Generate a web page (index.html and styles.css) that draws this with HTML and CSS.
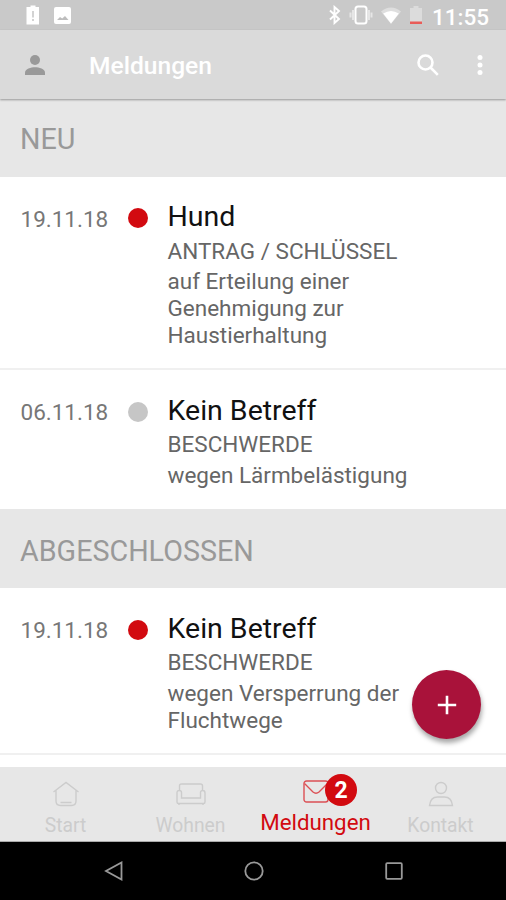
FILE: index.html
```html
<!DOCTYPE html>
<html lang="de">
<head>
  <meta charset="UTF-8" />
  <title>Meldungen</title>
  <link rel="stylesheet" href="styles.css">
</head>
<body>
  <div id="app">
    <div id="status-bar">
      <svg class="status-low" width="14" height="20" viewBox="0 0 14 20">
        <path fill="#fff" d="M4.500 0.500h5v1.500H13V19.500H0.500V2h4z" />
        <path fill="#c9c9c9" d="M6.200 6h1.600v6.500H6.200zM6.200 14h1.600v2H6.200z" />
      </svg>
      <svg class="status-image" width="17" height="17" viewBox="0 0 17 17">
        <rect width="17" height="17" rx="2" fill="#fff" />
        <path fill="#bdbdbd" d="M3 13l3-3 2.200 1.600L11 9l3.500 4z" />
      </svg>
      <div class="status-right">
        <svg width="14" height="20" viewBox="0 0 14 20">
          <path fill="none" stroke="#fff" stroke-width="1.900" d="M2 5.500l9 8.500-4.500 4V2L11 6l-9 8.500" />
        </svg>
        <svg class="vibrate" width="24" height="20" viewBox="0 0 24 20">
          <rect x="6.500" y="1.500" width="11" height="17" rx="2.500" fill="none" stroke="#fff" stroke-width="2" />
          <path stroke="#e6e6e6" stroke-width="2" d="M4 5v10M20 5v10M1.500 7.500v5M22.500 7.500v5" />
        </svg>
        <svg class="wifi" width="20" height="17" viewBox="0 0 20 17">
          <path fill="#dedede" d="M0 4.500Q10-3.500 20 4.500L10 17z" />
          <path fill="#fff" d="M2.200 6.500Q10 1.500 17.800 6.500L10 16.500z" />
        </svg>
        <svg class="battery" width="12" height="19" viewBox="0 0 12 19">
          <path fill="#dcdcdc" d="M3.500 0h5v2H12v14H0V2h3.500z" />
          <path fill="#e95c58" d="M0 15.500h12V18H0z" />
        </svg>
        <span class="clock">11:55</span>
      </div>
    </div>

    <div id="app-bar">
      <svg class="person" width="20" height="20" viewBox="0 0 20 20">
        <circle cx="10" cy="5" r="5" />
        <path d="M0 20v-2.500C0 14.200 6 12.300 10 12.300s10 1.900 10 5.200V20z" />
      </svg>
      <h1>Meldungen</h1>
      <svg class="search" width="22" height="22" viewBox="0 0 22 22">
        <circle cx="8.500" cy="8.500" r="7" />
        <path d="M13.500 13.500l7.300 7.300" />
      </svg>
      <svg class="more" width="6" height="22" viewBox="0 0 6 22">
        <circle cx="3" cy="3.500" r="2.500" />
        <circle cx="3" cy="11" r="2.500" />
        <circle cx="3" cy="18.500" r="2.500" />
      </svg>
    </div>

    <div id="list">
      <h2 class="first">NEU</h2>
      <div class="entry entry-long">
        <span class="date">19.11.18</span>
        <span class="dot red"></span>
        <div class="text">
          <h3>Hund</h3>
          <p class="type">ANTRAG / SCHLÜSSEL</p>
          <p class="desc">auf Erteilung einer<br>Genehmigung zur<br>Haustierhaltung</p>
        </div>
      </div>
      <div class="entry entry-short">
        <span class="date">06.11.18</span>
        <span class="dot"></span>
        <div class="text">
          <h3>Kein Betreff</h3>
          <p class="type">BESCHWERDE</p>
          <p class="desc">wegen Lärmbelästigung</p>
        </div>
      </div>
      <h2>ABGESCHLOSSEN</h2>
      <div class="entry entry-last">
        <span class="date">19.11.18</span>
        <span class="dot red"></span>
        <div class="text">
          <h3>Kein Betreff</h3>
          <p class="type">BESCHWERDE</p>
          <p class="desc">wegen Versperrung der<br>Fluchtwege</p>
        </div>
      </div>
      <div id="fab">
        <svg width="20" height="20" viewBox="0 0 20 20">
          <path stroke="#fff" stroke-width="2.600" d="M10 .8v18.400M.8 10h18.400" />
        </svg>
      </div>
    </div>

    <div id="tabs">
      <div class="tab">
        <svg width="28" height="26" viewBox="0 0 28 26">
          <path d="M1.500 11L14 1.500 26.500 11M4 9.500V20q0 4.500 4.500 4.500h11q4.500 0 4.500-4.500V9.500M8.500 21.500h11" />
        </svg>
        <span>Start</span>
      </div>
      <div class="tab">
        <svg width="30" height="26" viewBox="0 0 30 26">
          <path d="M3.500 9V5q0-2 2-2h19q2 0 2 2v4M5.500 17V11.500Q5.500 9.500 3.200 9.500T1 12v9q0 1.500 1.500 1.500h25q1.500 0 1.500-1.500v-9q0-2.500-2.200-2.500t-2.300 2V17zM3 22.500V24M27 22.500V24" />
        </svg>
        <span>Wohnen</span>
      </div>
      <div class="tab active">
        <svg width="26" height="24" viewBox="0 0 26 24">
          <rect x="1" y="1" width="24" height="21" rx="2.500" />
          <path d="M1.500 3.500l8.500 8.500q3 2.500 6 0l8.500-8.500" />
        </svg>
        <b class="badge">2</b>
        <span>Meldungen</span>
      </div>
      <div class="tab">
        <svg width="26" height="26" viewBox="0 0 26 26">
          <circle cx="13" cy="7" r="5.500" />
          <path d="M1.500 24.500q1-8.500 8-8.500h7q7 0 8 8.500z" />
        </svg>
        <span>Kontakt</span>
      </div>
    </div>

    <div id="system-nav">
      <svg width="20" height="20" viewBox="0 0 20 20"><path d="M17.500 1.500v17L2 10z" /></svg>
      <svg width="20" height="20" viewBox="0 0 20 20"><circle cx="10" cy="10" r="8.700" /></svg>
      <svg width="20" height="20" viewBox="0 0 20 20"><rect x="2.200" y="2.200" width="15.600" height="15.600" rx="1" /></svg>
    </div>
  </div>
</body>
</html>
```

FILE: styles.css
```css
body {
  margin: 0;
  font-family: Roboto, "Liberation Sans", sans-serif;
  background: #fff;
}

h1, h2, h3, p {
  margin: 0;
  font-weight: 400;
  white-space: nowrap;
}

svg {
  display: block;
  flex-shrink: 0;
}

#app {
  width: 506px;
  height: 900px;
  display: flex;
  flex-direction: column;
  overflow: hidden;
}

/* status bar */
#status-bar {
  height: 30px;
  flex-shrink: 0;
  box-sizing: border-box;
  padding: 0 17px 0 26px;
  background: #c9c9c9;
  display: flex;
  align-items: center;
}

.status-image {
  margin-left: 14px;
}

.status-right {
  margin-left: auto;
  display: flex;
  align-items: center;
}

.vibrate {
  margin-left: 7px;
}

.wifi {
  margin-left: 8px;
}

.battery {
  margin-left: 9px;
}

.clock {
  margin-left: 10px;
  width: 57px;
  color: #fff;
  font-size: 22.5px;
  font-weight: 500;
  line-height: 30px;
  padding-top: 4px;
}

/* app bar */
#app-bar {
  position: relative;
  z-index: 1;
  height: 69px;
  flex-shrink: 0;
  box-sizing: border-box;
  padding: 0 23px 0 25px;
  background: #dadada;
  box-shadow: 0 1px 2px rgba(0, 0, 0, 0.35);
  display: flex;
  align-items: center;
}

.person {
  fill: #999;
}

#app-bar h1 {
  margin-left: 44px;
  padding-top: 2px;
  color: #fff;
  font-size: 24.6px;
  font-weight: 500;
}

.search {
  margin-left: auto;
  fill: none;
  stroke: #fff;
  stroke-width: 2.6;
}

.more {
  margin-left: 38px;
  fill: #fff;
}

/* list */
#list {
  position: relative;
  height: 668px;
  flex-shrink: 0;
}

#list h2 {
  height: 79px;
  box-sizing: border-box;
  padding: 3px 20px 0;
  background: #e7e7e7;
  color: #999;
  font-size: 28.7px;
  line-height: 79px;
}

#list h2.first {
  height: 78px;
  padding-top: 1px;
}

.entry {
  display: flex;
  align-items: flex-start;
  box-sizing: border-box;
  padding: 23px 0 0 20.5px;
  border-bottom: 2px solid #f0f0f0;
}

.entry-long {
  height: 193px;
}

.entry-short {
  height: 139px;
  border-bottom: 0;
}

.entry-last {
  height: 167px;
}

.date {
  width: 107.5px;
  padding-top: 4px;
  color: #777;
  font-size: 22.5px;
  line-height: 30px;
}

.dot {
  width: 20px;
  height: 20px;
  margin-top: 9px;
  border-radius: 50%;
  background: #c6c6c6;
}

.entry-long .dot {
  margin-top: 8px;
}

.dot.red {
  background: #d20a10;
}

.text {
  margin-left: 19.5px;
}

.text h3 {
  color: #111;
  font-size: 28.5px;
  line-height: 36px;
}

.entry-long h3 {
  margin-top: -1px;
  padding-bottom: 1px;
}

.type {
  color: #666;
  font-size: 22.5px;
  line-height: 31px;
}

.desc {
  color: #666;
  font-size: 22.5px;
  line-height: 27px;
  padding-top: 2px;
}

.entry-long .desc {
  padding-top: 1px;
}

#fab {
  position: absolute;
  left: 412px;
  top: 571px;
  width: 69px;
  height: 69px;
  border-radius: 50%;
  background: #a9123a;
  box-shadow: 1px 4px 5px rgba(0, 0, 0, 0.35);
  display: flex;
  align-items: center;
  justify-content: center;
}

/* bottom tabs */
#tabs {
  height: 75px;
  flex-shrink: 0;
  box-sizing: border-box;
  padding: 0 3px;
  background: #e7e7e7;
  border-bottom: 1px solid #aaa;
  display: flex;
}

.tab {
  position: relative;
  width: 125.2px;
  display: flex;
  flex-direction: column;
  align-items: center;
  color: #ccc;
  font-size: 19.3px;
}

.tab svg {
  margin-top: 14px;
  fill: none;
  stroke: #ccc;
  stroke-width: 1.4;
}

.tab span {
  margin-top: 7px;
  line-height: 24px;
}

.tab.active {
  color: #d20a10;
  font-size: 22.3px;
}

.tab.active svg {
  stroke: #dc5055;
  margin-top: 13px;
}

.tab.active span {
  margin-top: 6px;
}

.badge {
  position: absolute;
  left: 72px;
  top: 7px;
  width: 32px;
  height: 32px;
  border-radius: 50%;
  background: #d20a10;
  color: #fff;
  font-size: 23px;
  line-height: 34px;
  text-align: center;
}

/* android navigation */
#system-nav {
  height: 58px;
  flex-shrink: 0;
  padding-left: 1px;
  background: #000;
  display: flex;
  justify-content: center;
  align-items: center;
  gap: 120px;
}

#system-nav svg {
  fill: none;
  stroke: #999;
  stroke-width: 1.8;
}
```
